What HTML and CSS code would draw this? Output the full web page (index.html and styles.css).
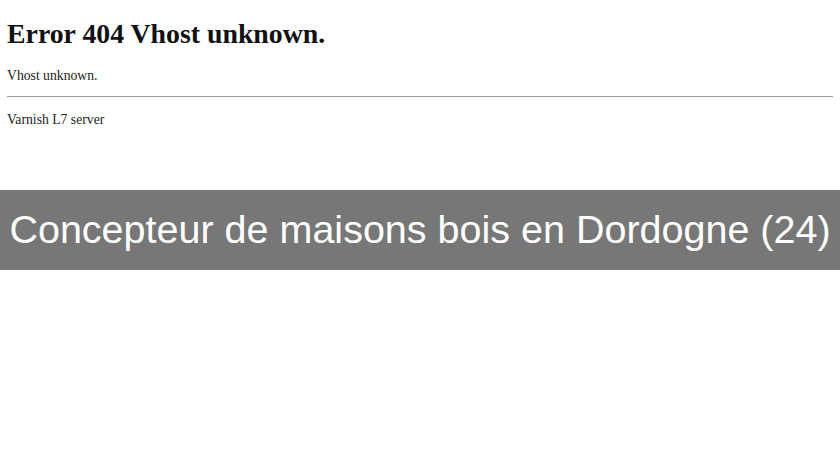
FILE: index.html
```html
<!DOCTYPE html>
<html lang="fr">

<head>
    <meta charset="UTF-8">
    <title>Concepteur de maisons bois en Dordogne (24)</title>
    <link rel="stylesheet" href="styles.css">
</head>

<body>

    <div class="error">
        <h1>Error 404 Vhost unknown.</h1>
        <p>Vhost unknown.</p>
        <hr>
        <p>Varnish L7 server</p>
    </div>

    <!-- bandeau titre -->
    <div class="banner">
        <span>Concepteur de maisons bois en Dordogne (24)</span>
    </div>

</body>

</html>
```

FILE: styles.css
```css
body {
    margin: 0;
    background-color: #fff;
    font-family: 'Liberation Serif', serif;
    color: #111;
}

.error {
    padding: 0 7px;
    height: 190px;
}

.error h1 {
    font-size: 27.8px;
    font-weight: bold;
    margin: 0;
    padding-top: 19px;
    line-height: 30px;
}

.error p {
    font-size: 13.7px;
    margin: 0;
    line-height: 16px;
    color: #222;
}

.error h1 + p {
    margin-top: 19px;
}

.error hr {
    border: none;
    border-top: 1px solid #999;
    margin: 12px 0 15px;
}

.banner {
    background-color: #777;
    height: 80px;
    display: flex;
    align-items: center;
    justify-content: center;
}

.banner span {
    font-family: 'Liberation Sans', Arial, sans-serif;
    font-size: 39.5px;
    color: #fff;
    margin-top: -2px;
}
```
